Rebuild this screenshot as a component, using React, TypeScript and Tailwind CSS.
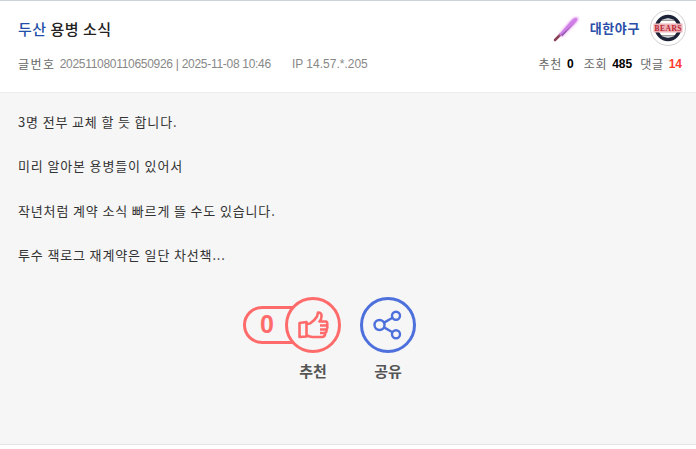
import React from 'react'

const kr = "font-['Noto_Sans_CJK_KR','Noto_Sans',sans-serif]"
const latin = "font-['Liberation_Sans','Noto_Sans_CJK_KR',sans-serif]"

const BatIcon: React.FC = () => (
  <svg width="28" height="28" viewBox="0 0 28 28">
    <path d="M3 26 L9 20" stroke="#8a3f55" strokeWidth="2.5" strokeLinecap="round" />
    <path d="M7 20 L19 6 Q23 1.5 26 3.5 Q27.5 6 23 10 L10 23 Z" fill="#e59af0" className="blur-[1px]" />
    <path d="M7.5 20 L19 7 Q23 3 25 4.5 Q26 6 22.5 9.5 L10 22.5 Z" fill="#cf7fe6" />
    <path d="M9 21 L18 13 L24 7 L10.5 22 Z" fill="#8d5da8" />
  </svg>
)

const TeamLogo: React.FC = () => (
  <svg width="36" height="36" viewBox="0 0 36 36">
    <circle cx="18" cy="18" r="17.5" fill="#fff" stroke="#cfcfcf" />
    <circle cx="18" cy="18" r="11.5" fill="#fff" stroke="#1c2238" strokeWidth="3.5" />
    <rect x="3.5" y="13.5" width="29" height="9" fill="#eeb4b8" />
    <text x="18" y="21" textAnchor="middle" fontSize="7.5" fontWeight="700" fontFamily="Liberation Serif, serif" fill="#b5202e" textLength="27">BEARS</text>
    <rect x="12" y="25" width="12" height="1.5" fill="#999" />
    <rect x="12" y="9.5" width="12" height="1.5" fill="#999" />
  </svg>
)

const ThumbIcon: React.FC = () => (
  <svg width="31" height="28" viewBox="0 0 31 28" fill="none" stroke="#ff6b6b" strokeWidth="2.6" strokeLinejoin="round">
    <path d="M1.5 12 L8.5 11 V25.5 L1.5 26 Z" />
    <path d="M8.5 13 L12 12.5 Q17 9 19 5.5 L20 1.5 Q24 1.5 23.5 5.5 Q23.5 8.5 21.5 10.5 L28 10.5 Q30 11.5 29 14.5 Q30 16.5 28.5 18.5 Q29 21 27 22 Q27.5 25.5 24.5 26 L15 26 Q11 26 8.5 24" />
    <path d="M22 14.5 H29 M22 18.5 H28.5 M22 22 H27" />
  </svg>
)

const ShareIcon: React.FC = () => (
  <svg width="30" height="30" viewBox="0 0 30 30" fill="none" stroke="#4d70dc" strokeWidth="2.4">
    <circle cx="6.5" cy="15" r="5" />
    <circle cx="23" cy="5.8" r="4" />
    <circle cx="23" cy="24.2" r="4" />
    <path d="M11 12.6 L19.5 7.8 M11 17.4 L19.5 22.2" />
  </svg>
)

export default function App() {
  const paragraphs = [
    '3명 전부 교체 할 듯 합니다.',
    '미리 알아본 용병들이 있어서',
    '작년처럼 계약 소식 빠르게 뜰 수도 있습니다.',
    '투수 잭로그 재계약은 일단 차선책...',
  ]

  return (
    <div className={`w-[696px] h-[449px] bg-white overflow-hidden ${kr}`}>
      <header className="h-[93px] border-t border-t-[#ccd2d8] border-b border-b-[#ececec] pl-[18px] pr-[10px]">
        <div className="flex items-center justify-between h-[54px]">
          <h1 className="text-[15px] tracking-[0.5px] font-medium text-[#222] leading-[20px] mt-[2px]">
            <span className="text-[#1f4fa8]">두산</span> 용병 소식
          </h1>
          <div className="flex items-center">
            <BatIcon />
            <span className="ml-[10px] mr-[10px] text-[13px] tracking-[0.6px] font-bold text-[#2b4fa8]">대한야구</span>
            <TeamLogo />
          </div>
        </div>
        <div className="flex items-center justify-between h-[20px] -mt-[1px] pr-[4px] text-[12px] text-[#666]">
          <div className="flex items-center">
            <span className="tracking-[1.5px]">글번호</span>
            <span className={`ml-[4px] tracking-[-0.29px] text-[#888] ${latin}`}>202511080110650926 | 2025-11-08 10:46</span>
            <span className={`ml-[21px] text-[#888] ${latin}`}>IP 14.57.*.205</span>
          </div>
          <div className="flex items-center -mt-[1px]">
            <span className="tracking-[0.7px]">추천</span>
            <b className={`ml-[5px] text-black ${latin}`}>0</b>
            <span className="ml-[10px] tracking-[0.7px]">조회</span>
            <b className={`ml-[5px] text-black ${latin}`}>485</b>
            <span className="ml-[8px] tracking-[0.7px]">댓글</span>
            <b className={`ml-[5px] text-[#ff3b30] ${latin}`}>14</b>
          </div>
        </div>
      </header>

      <main className="h-[352px] bg-[#f6f6f6] border-b border-b-[#e4e4e4] px-[18px] pt-[7px]">
        <div className="text-[13px] tracking-[0.85px] text-[#333]">
          {paragraphs.map((text) => (
            <p key={text} className="h-[44.3px] leading-[44.3px]">{text}</p>
          ))}
        </div>
        <div className="flex justify-center gap-[19px] mt-[20px] pr-[37px]">
          <div className="flex flex-col items-end">
            <div className="flex items-center">
              <div className="w-[58px] h-[38px] rounded-l-full border-[3px] border-[#ff6b6b] flex items-center pl-[14px]">
                <span className={`text-[25px] font-bold text-[#ff6b6b] ${latin}`}>0</span>
              </div>
              <div className="-ml-[16px] w-[56px] h-[56px] rounded-full border-[3px] border-[#ff6b6b] bg-[#f6f6f6] flex items-center justify-center">
                <ThumbIcon />
              </div>
            </div>
            <span className="w-[56px] mt-[7px] text-center text-[15px] font-bold text-[#555]">추천</span>
          </div>
          <div className="flex flex-col">
            <div className="w-[56px] h-[56px] rounded-full border-[3px] border-[#4d70dc] flex items-center justify-center">
              <ShareIcon />
            </div>
            <span className="mt-[7px] text-center text-[15px] font-bold text-[#555]">공유</span>
          </div>
        </div>
      </main>
    </div>
  )
}
